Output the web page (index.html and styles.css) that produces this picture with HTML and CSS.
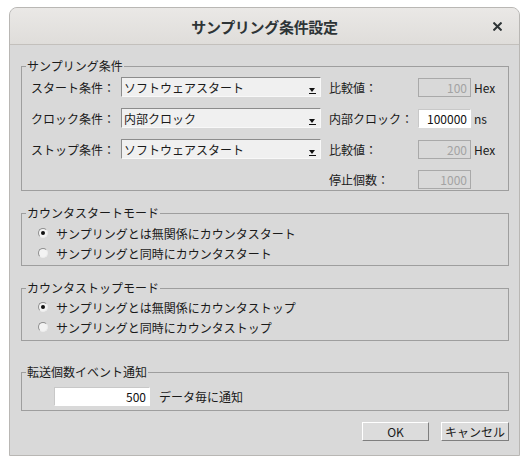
FILE: index.html
```html
<!DOCTYPE html>
<html lang="ja">
<head>
<meta charset="utf-8">
<title>サンプリング条件設定</title>
<link rel="stylesheet" href="styles.css">
</head>
<body>
<div class="window">
  <div class="titlebar">
    <span class="title">サンプリング条件設定</span>
    <span class="close"><svg width="9" height="9" viewBox="0 0 9 9"><path d="M1.2 1.2 L7.8 7.8 M7.8 1.2 L1.2 7.8" stroke="#2e3436" stroke-width="2" stroke-linecap="square"/></svg></span>
  </div>
  <div class="content">
    <div class="group g1">
      <span class="gtitle">サンプリング条件</span>
      <div class="grid">
        <span class="lbl">スタート条件：</span>
        <div class="combo"><span class="ctext">ソフトウェアスタート</span><span class="arrow"></span></div>
        <span class="lbl2">比較値：</span>
        <span class="field disabled">100</span>
        <span class="unit">Hex</span>

        <span class="lbl">クロック条件：</span>
        <div class="combo"><span class="ctext">内部クロック</span><span class="arrow"></span></div>
        <span class="lbl2">内部クロック：</span>
        <span class="field enabled">100000</span>
        <span class="unit">ns</span>

        <span class="lbl">ストップ条件：</span>
        <div class="combo"><span class="ctext">ソフトウェアスタート</span><span class="arrow"></span></div>
        <span class="lbl2">比較値：</span>
        <span class="field disabled">200</span>
        <span class="unit">Hex</span>

        <span class="lbl"></span>
        <span></span>
        <span class="lbl2">停止個数：</span>
        <span class="field disabled">1000</span>
        <span class="unit"></span>
      </div>
    </div>

    <div class="group g2">
      <span class="gtitle">カウンタスタートモード</span>
      <div class="radio"><span class="dot on"></span><span>サンプリングとは無関係にカウンタスタート</span></div>
      <div class="radio"><span class="dot"></span><span>サンプリングと同時にカウンタスタート</span></div>
    </div>

    <div class="group g3">
      <span class="gtitle">カウンタストップモード</span>
      <div class="radio"><span class="dot on"></span><span>サンプリングとは無関係にカウンタストップ</span></div>
      <div class="radio"><span class="dot"></span><span>サンプリングと同時にカウンタストップ</span></div>
    </div>

    <div class="group g4">
      <span class="gtitle">転送個数イベント通知</span>
      <div class="notify">
        <span class="field enabled wide">500</span>
        <span>データ毎に通知</span>
      </div>
    </div>

    <div class="buttons">
      <span class="btn ok">OK</span>
      <span class="btn cancel">キャンセル</span>
    </div>
  </div>
</div>
</body>
</html>
```

FILE: styles.css
```css
* { box-sizing: border-box; }
html, body { margin: 0; padding: 0; background: #ffffff; }
body {
  font-family: "Noto Sans CJK JP", "Noto Sans", sans-serif;
  font-size: 12px;
  color: #1a1a1a;
}
.window {
  margin: 7px 0 0 9px;
  width: 511px;
  height: 449px;
  border: 1px solid #b9b7b4;
  border-radius: 8px 8px 0 0;
  background: #d9d9d9;
  overflow: hidden;
}
.titlebar {
  height: 37px;
  border-bottom: 1px solid #c3c0bc;
  background: linear-gradient(#eae8e6, #dfddda);
  display: flex;
  align-items: center;
  justify-content: center;
  position: relative;
}
.title {
  font-size: 15px;
  font-weight: bold;
  color: #2e3436;
  letter-spacing: -0.3px;
}
.close {
  position: absolute;
  right: 17px;
  top: 14px;
  width: 9px;
  height: 9px;
  display: flex;
}
.content {
  padding: 0 10px 0 11px;
}
.group {
  position: relative;
  border: 1px solid #9e9e9e;
}
.gtitle {
  position: absolute;
  top: -9px;
  left: 4px;
  padding: 0 1px;
  line-height: 16px;
  background: #d9d9d9;
}
.g1 { margin-top: 21px; padding: 10px 0 1px 9px; }
.grid {
  display: grid;
  grid-template-columns: 90px 200px 97px 53px auto;
  grid-template-rows: 20px 20px 20px 19px;
  row-gap: 11px;
  align-items: center;
}
.lbl { white-space: nowrap; }
.lbl2 { padding-left: 8px; white-space: nowrap; }
.combo {
  height: 20px;
  display: flex;
  align-items: center;
  justify-content: space-between;
  background: #f0f0f0;
  border-top: 1px solid #8c8c8c;
  border-left: 1px solid #8c8c8c;
  border-right: 1px solid #f8f8f8;
  border-bottom: 1px solid #f8f8f8;
  position: relative;
}
.ctext { padding-left: 2px; }
.arrow {
  align-self: flex-end;
  margin: 0 4px 2px 0;
  width: 7px;
  height: 6px;
  position: relative;
}
.arrow::before {
  content: "";
  position: absolute;
  left: 0;
  top: 0;
  border-left: 3.5px solid transparent;
  border-right: 3.5px solid transparent;
  border-top: 4px solid #111;
}
.arrow::after {
  content: "";
  position: absolute;
  left: 0;
  bottom: 0;
  width: 7px;
  height: 1px;
  background: #111;
}
.field {
  height: 19px;
  text-align: right;
  padding-right: 3px;
  line-height: 17px;
  border: 1px solid #a9a9a9;
}
.disabled { background: #d9d9d9; color: #a3a3a3; }
.enabled { background: #ffffff; color: #111; border-color: #c8c8c8 #ffffff #ffffff #c8c8c8; }
.unit { padding-left: 3px; }
.g2 { margin-top: 22px; padding: 9px 0 2px 16px; }
.g3 { margin-top: 22px; padding: 8px 0 3px 16px; }
.radio {
  height: 20px;
  display: flex;
  align-items: center;
  gap: 8px;
}
.dot {
  width: 10px;
  height: 10px;
  border-radius: 50%;
  border: 1px solid;
  border-color: #8e8e8e #ececec #ececec #8e8e8e;
  background: #f3f3f3;
  display: flex;
  align-items: center;
  justify-content: center;
}
.dot.on::after {
  content: "";
  width: 4px;
  height: 4px;
  border-radius: 50%;
  background: #111;
}
.g4 { margin-top: 31px; padding: 14px 0 4px 32px; }
.notify {
  display: flex;
  align-items: center;
  gap: 9px;
}
.wide { width: 96px; height: 19px; line-height: 17px; }
.buttons {
  margin-top: 11px;
  display: flex;
  justify-content: flex-end;
  gap: 12px;
}
.btn {
  height: 19px;
  display: flex;
  align-items: center;
  justify-content: center;
  background: #dcdcdc;
  border: 1px solid;
  border-color: #ffffff #7f7f7f #7f7f7f #ffffff;
  font-size: 12px;
}
.ok { width: 67px; }
.cancel { width: 68px; }
```
